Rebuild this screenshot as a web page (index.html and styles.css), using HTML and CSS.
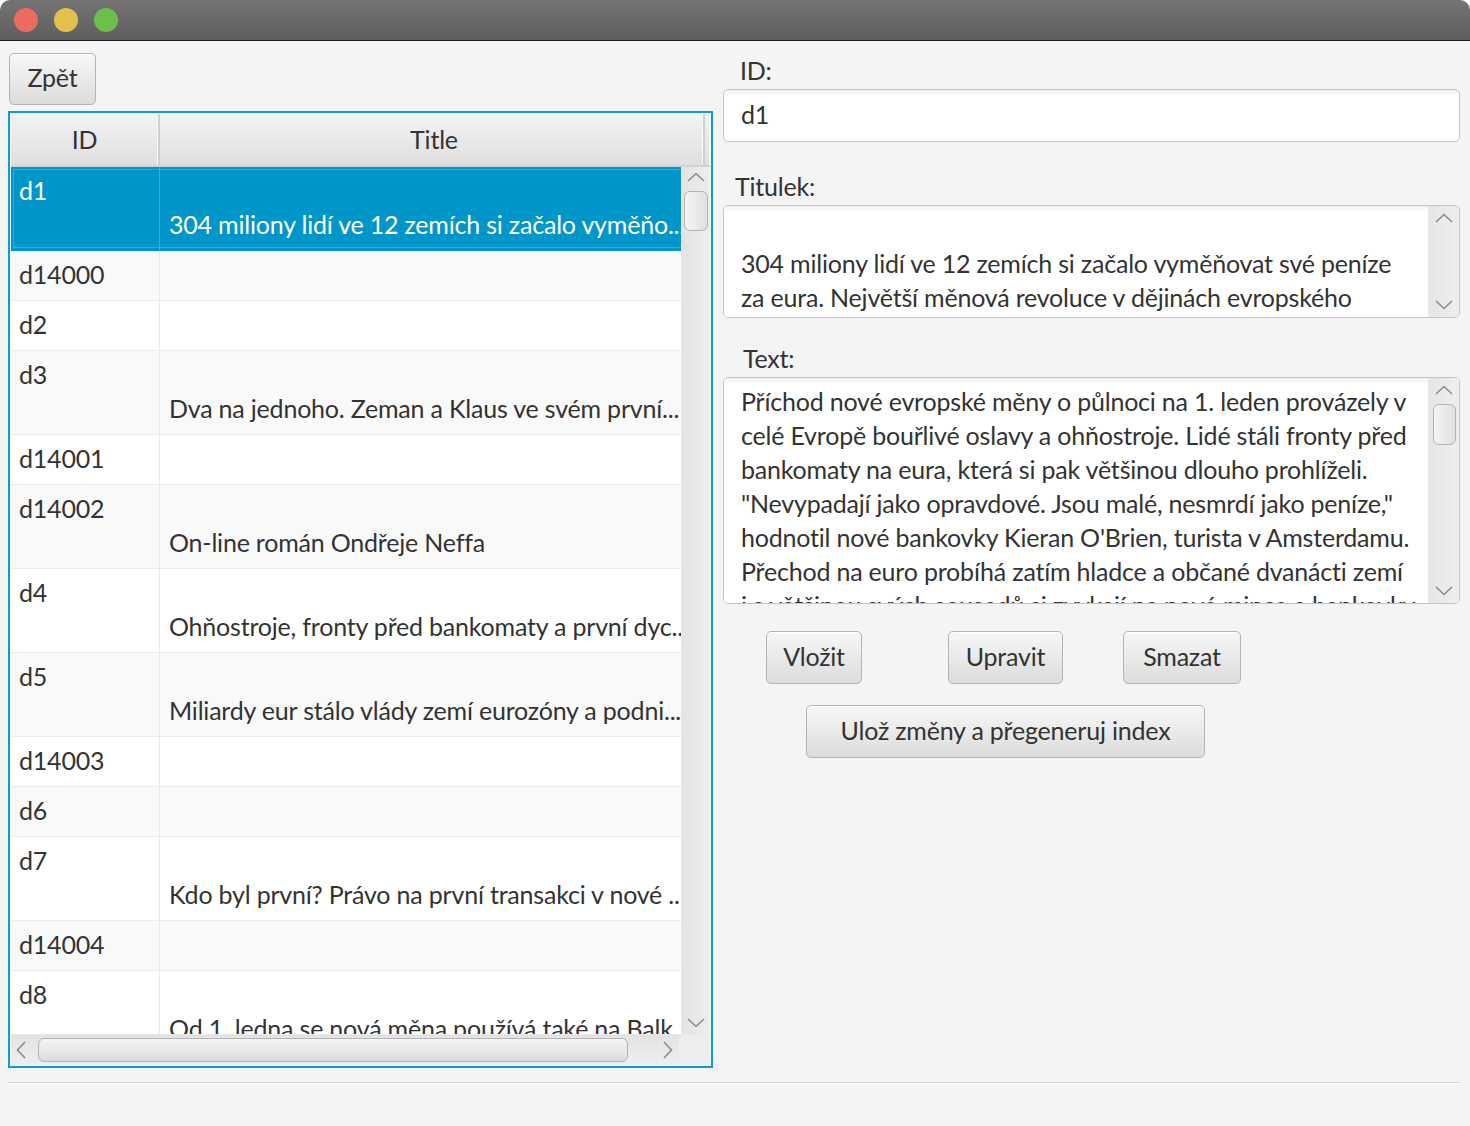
FILE: index.html
```html
<!DOCTYPE html>
<html lang="cs">
<head>
<meta charset="utf-8">
<title>Editor dokumentů</title>
<link rel="stylesheet" href="styles.css">
</head>
<body>
<div class="window">
  <div class="titlebar">
    <span class="light light-red"></span>
    <span class="light light-yellow"></span>
    <span class="light light-green"></span>
  </div>
  <div class="content">
    <div class="main">
      <div class="left">
        <button class="btn btn-back">Zpět</button>
        <div class="table">
          <div class="thead">
            <div class="th th-id">ID</div>
            <div class="th th-title">Title</div>
            <div class="th th-filler"></div>
          </div>
          <div class="tbody">
            <div class="rows">
              <div class="row row-sel double"><div class="cell cell-id">d1</div><div class="cell cell-title"><br>304 miliony lidí ve 12 zemích si začalo vyměňo...</div></div>
              <div class="row odd"><div class="cell cell-id">d14000</div><div class="cell cell-title"></div></div>
              <div class="row"><div class="cell cell-id">d2</div><div class="cell cell-title"></div></div>
              <div class="row odd double"><div class="cell cell-id">d3</div><div class="cell cell-title"><br>Dva na jednoho. Zeman a Klaus ve svém první...</div></div>
              <div class="row"><div class="cell cell-id">d14001</div><div class="cell cell-title"></div></div>
              <div class="row odd double"><div class="cell cell-id">d14002</div><div class="cell cell-title"><br>On-line román Ondřeje Neffa</div></div>
              <div class="row double"><div class="cell cell-id">d4</div><div class="cell cell-title"><br>Ohňostroje, fronty před bankomaty a první dyc...</div></div>
              <div class="row odd double"><div class="cell cell-id">d5</div><div class="cell cell-title"><br>Miliardy eur stálo vlády zemí eurozóny a podni...</div></div>
              <div class="row"><div class="cell cell-id">d14003</div><div class="cell cell-title"></div></div>
              <div class="row odd"><div class="cell cell-id">d6</div><div class="cell cell-title"></div></div>
              <div class="row double"><div class="cell cell-id">d7</div><div class="cell cell-title"><br>Kdo byl první? Právo na první transakci v nové ...</div></div>
              <div class="row odd"><div class="cell cell-id">d14004</div><div class="cell cell-title"></div></div>
              <div class="row double"><div class="cell cell-id">d8</div><div class="cell cell-title"><br>Od 1. ledna se nová měna používá také na Balk...</div></div>
            </div>
            <div class="vscroll">
              <svg class="arrow arrow-up" width="18" height="10" viewBox="0 0 18 10"><polyline points="1,9 9,1.5 17,9" fill="none" stroke="#8c8c8c" stroke-width="1.6"/></svg>
              <div class="vthumb"></div>
              <svg class="arrow arrow-down" width="18" height="10" viewBox="0 0 18 10"><polyline points="1,1 9,8.5 17,1" fill="none" stroke="#8c8c8c" stroke-width="1.6"/></svg>
            </div>
          </div>
          <div class="hscroll">
            <svg class="harrow" width="10" height="18" viewBox="0 0 10 18"><polyline points="9,1 1.5,9 9,17" fill="none" stroke="#8c8c8c" stroke-width="1.6"/></svg>
            <div class="hthumb"></div>
            <svg class="harrow" width="10" height="18" viewBox="0 0 10 18"><polyline points="1,1 8.5,9 1,17" fill="none" stroke="#8c8c8c" stroke-width="1.6"/></svg>
            <div class="corner"></div>
          </div>
        </div>
      </div>
      <div class="right">
        <div class="label label-id">ID:</div>
        <div class="field">d1</div>
        <div class="label label-titulek">Titulek:</div>
        <div class="area area-title">
          <div class="area-text">
            <div class="line">&nbsp;</div>
            <div class="line">304 miliony lidí ve 12 zemích si začalo vyměňovat své peníze</div>
            <div class="line">za eura. Největší měnová revoluce v dějinách evropského</div>
          </div>
          <div class="ascroll">
            <svg class="arrow" width="18" height="10" viewBox="0 0 18 10"><polyline points="1,9 9,1.5 17,9" fill="none" stroke="#8c8c8c" stroke-width="1.6"/></svg>
            <svg class="arrow" width="18" height="10" viewBox="0 0 18 10"><polyline points="1,1 9,8.5 17,1" fill="none" stroke="#8c8c8c" stroke-width="1.6"/></svg>
          </div>
        </div>
        <div class="label label-text">Text:</div>
        <div class="area area-body">
          <div class="area-text">
            <div class="line">Příchod nové evropské měny o půlnoci na 1. leden provázely v</div>
            <div class="line">celé Evropě bouřlivé oslavy a ohňostroje. Lidé stáli fronty před</div>
            <div class="line">bankomaty na eura, která si pak většinou dlouho prohlíželi.</div>
            <div class="line">"Nevypadají jako opravdové. Jsou malé, nesmrdí jako peníze,"</div>
            <div class="line">hodnotil nové bankovky Kieran O'Brien, turista v Amsterdamu.</div>
            <div class="line">Přechod na euro probíhá zatím hladce a občané dvanácti zemí</div>
            <div class="line">i s většinou svých sousedů si zvykají na nové mince a bankovky</div>
          </div>
          <div class="ascroll">
            <svg class="arrow" width="18" height="10" viewBox="0 0 18 10"><polyline points="1,9 9,1.5 17,9" fill="none" stroke="#8c8c8c" stroke-width="1.6"/></svg>
            <div class="athumb"></div>
            <div class="aspace"></div>
            <svg class="arrow" width="18" height="10" viewBox="0 0 18 10"><polyline points="1,1 9,8.5 17,1" fill="none" stroke="#8c8c8c" stroke-width="1.6"/></svg>
          </div>
        </div>
        <div class="actions">
          <button class="btn btn-insert">Vložit</button>
          <button class="btn btn-edit">Upravit</button>
          <button class="btn btn-delete">Smazat</button>
        </div>
        <div class="actions2">
          <button class="btn btn-save">Ulož změny a přegeneruj index</button>
        </div>
      </div>
    </div>
    <div class="separator"></div>
  </div>
</div>
</body>
</html>
```
FILE: styles.css
```css
* { box-sizing: border-box; }
html, body { margin: 0; padding: 0; background: #ffffff; }
body {
  font-family: "Lato", "Liberation Sans", sans-serif;
  font-size: 25px;
  letter-spacing: -0.2px;
  color: #333333;
}
.window {
  width: 1470px;
  height: 1126px;
  background: #f4f4f4;
  border-radius: 10px 10px 0 0;
  overflow: hidden;
  display: flex;
  flex-direction: column;
}
.titlebar {
  height: 41px;
  flex: none;
  background: linear-gradient(#747474, #5e5e5e);
  border-bottom: 1px solid #1e1e1e;
  display: flex;
  align-items: center;
  padding-left: 14px;
  gap: 16px;
}
.light {
  width: 24px;
  height: 24px;
  border-radius: 50%;
  display: block;
  margin-top: -1px;
}
.light-red { background: #ed6a5e; }
.light-yellow { background: #e3c04d; }
.light-green { background: #6cbf4a; }

.content { flex: 1; display: flex; flex-direction: column; }
.main { display: flex; padding-top: 12px; }
.left {
  width: 713px;
  padding-left: 8px;
  display: flex;
  flex-direction: column;
  align-items: flex-start;
}
.btn {
  font-family: inherit;
  font-size: 25px;
  letter-spacing: -0.2px;
  color: #333333;
  height: 53px;
  border: 1px solid #b4b4b4;
  border-radius: 5px;
  background: linear-gradient(#f7f7f7, #dcdcdc);
  box-shadow: inset 0 1px 0 rgba(255,255,255,0.8);
  padding: 0 17px 3px;
  line-height: 1;
  display: flex;
  align-items: center;
  justify-content: center;
}
.btn-back { margin-left: 1px; width: 87px; height: 52px; }

.table {
  margin-top: 6px;
  width: 705px;
  height: 957px;
  border: 2px solid #0a9ed4;
  padding: 1px;
  background: #f4f4f4;
  display: flex;
  flex-direction: column;
}
.thead {
  height: 53px;
  flex: none;
  display: flex;
  background: linear-gradient(#f3f3f3, #dfdfdf);
  border-bottom: 2px solid #d2d2d2;
  box-shadow: inset 0 1px 0 #fafafa;
}
.th {
  display: flex;
  align-items: center;
  justify-content: center;
  padding-bottom: 1px;
  border-right: 2px solid #d0d0d0;
  box-shadow: inset -1px 0 0 #f8f8f8;
}
.th-id { width: 149px; }
.th-title { width: 545px; padding-left: 5px; }
.th-filler { flex: 1; border-right: none; }
.tbody {
  position: relative;
  height: 867px;
  flex: none;
  overflow: hidden;
  background: #f4f4f4;
}
.rows { width: 697px; }
.row {
  display: flex;
  height: 50px;
  background: #ffffff;
  border-bottom: 1px solid #ececec;
}
.row.odd { background: #f9f9f9; }
.row.double { height: 84px; }
.cell {
  padding-top: 6px;
  line-height: 34px;
  white-space: nowrap;
  overflow: hidden;
}
.cell-id { width: 149px; padding-left: 8px; border-right: 1px solid #e8e8e8; }
.cell-title { width: 545px; padding-left: 9px; }
.row-sel {
  background: #0096c9;
  color: #ffffff;
  box-shadow: inset 0 0 0 2px #0096c9, inset 0 0 0 3px #2eaad6;
  border-bottom-color: #0096c9;
}
.row-sel .cell-id { border-right-color: #35aed8; }

.vscroll {
  position: absolute;
  top: 0;
  right: 0;
  width: 29px;
  height: 100%;
  background: linear-gradient(90deg, #e3e3e3, #eeeeee);
  border-left: 1px solid #e8e8e8;
  display: flex;
  flex-direction: column;
  align-items: center;
}
.vscroll .arrow-up { margin-top: 5px; flex: none; }
.vthumb {
  margin-top: 9px;
  width: 24px;
  height: 40px;
  border: 1px solid #b3b3b3;
  border-radius: 6px;
  background: linear-gradient(90deg, #f4f4f4, #e0e0e0);
  flex: none;
}
.vscroll .arrow-down { margin-top: auto; margin-bottom: 6px; flex: none; }

.hscroll {
  height: 31px;
  flex: none;
  display: flex;
  align-items: center;
  background: linear-gradient(#e3e3e3, #eeeeee);
  border-top: 1px solid #e8e8e8;
  padding-left: 5px;
}
.harrow { flex: none; }
.hthumb {
  margin-left: 12px;
  margin-right: 35px;
  width: 590px;
  height: 24px;
  border: 1px solid #b3b3b3;
  border-radius: 6px;
  background: linear-gradient(#f4f4f4, #dcdcdc);
  flex: none;
}
.corner { flex: 1; align-self: stretch; background: #ededed; margin-left: 6px; }

.right {
  width: 737px;
  margin-left: 10px;
  display: flex;
  flex-direction: column;
  align-items: flex-start;
}
.label { line-height: 34px; height: 34px; }
.label-id { margin-top: 0; margin-left: 17px; margin-bottom: 2px; }
.label-titulek { margin-top: 27px; margin-left: 12px; margin-bottom: 2px; }
.label-text { margin-top: 23px; margin-left: 20px; margin-bottom: 2px; }
.field {
  width: 737px;
  height: 53px;
  border: 1px solid #c4c4c4;
  border-radius: 5px;
  background: linear-gradient(#f0f0f0, #ffffff 6px);
  padding-left: 17px;
  padding-bottom: 4px;
  display: flex;
  align-items: center;
}
.area {
  width: 737px;
  border: 1px solid #c4c4c4;
  border-radius: 5px;
  background: #ffffff;
  display: flex;
  overflow: hidden;
}
.area-title { height: 113px; }
.area-body { height: 227px; }
.area-text {
  flex: 1;
  padding: 6px 0 0 17px;
  overflow: hidden;
  background: linear-gradient(#f1f1f1, #ffffff 6px);
}
.line { line-height: 34px; white-space: nowrap; }
.ascroll {
  width: 31px;
  flex: none;
  background: linear-gradient(90deg, #e5e5e5, #efefef);
  border-left: 1px solid #e9e9e9;
  display: flex;
  flex-direction: column;
  justify-content: space-between;
  align-items: center;
  padding: 7px 0 7px;
}
.ascroll .arrow { flex: none; }
.athumb {
  margin-top: 9px;
  width: 23px;
  height: 41px;
  border: 1px solid #b3b3b3;
  border-radius: 6px;
  background: linear-gradient(90deg, #f4f4f4, #e0e0e0);
  flex: none;
}
.aspace { flex: 1; }
.actions {
  display: flex;
  margin-top: 27px;
  margin-left: 43px;
}
.btn-insert { width: 96px; }
.btn-edit { width: 115px; margin-left: 86px; }
.btn-delete { width: 118px; margin-left: 60px; }
.actions2 { margin-top: 21px; margin-left: 83px; }
.btn-save { width: 399px; }

.separator {
  margin: 14px 10px 0 8px;
  height: 2px;
  border-top: 1px solid #d2d2d2;
  border-bottom: 1px solid #ffffff;
}
```
